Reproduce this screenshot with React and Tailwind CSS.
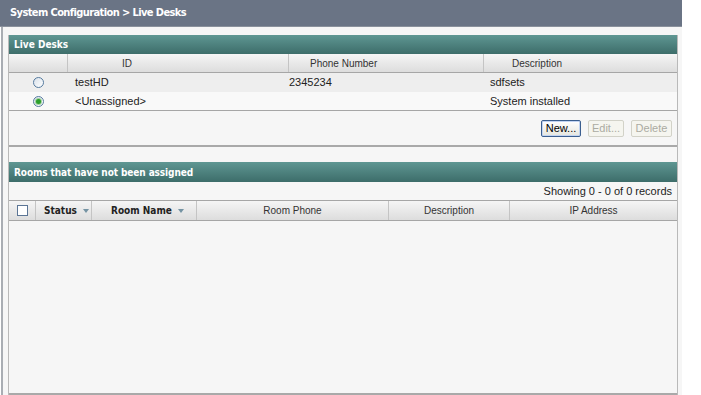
import React from "react";

const F = { fontFamily: '"Liberation Sans", Arial, sans-serif' };
const FB = { fontFamily: '"DejaVu Sans Condensed", "DejaVu Sans", sans-serif' };

function Radio({ checked }) {
  return (
    <div className="w-[11px] h-[11px] rounded-full border border-[#557a9e] bg-gradient-to-br from-[#d9e1ea] to-white flex items-center justify-center">
      {checked && <div className="w-[5px] h-[5px] rounded-full bg-[#2c9f2c] shadow-[0_0_0_1px_#9fd09f]" />}
    </div>
  );
}

function SortArrow() {
  return (
    <svg width="6" height="4" viewBox="0 0 6 4" className="ml-[6px]">
      <path d="M0 0 L6 0 L3 4 Z" fill="#7493a3" />
    </svg>
  );
}

function Btn({ children, primary, w }) {
  return (
    <div
      className={
        "h-[17px] flex items-center justify-center text-[11px] rounded-[2px] " +
        w +
        " " +
        (primary
          ? "border border-[#3a5e8f] bg-gradient-to-b from-white to-[#e6e6de] text-black shadow-[inset_0_0_0_1px_#c2d4f2]"
          : "border border-[#d2d2c8] bg-[#f5f5ef] text-[#ababa2]")
      }
      style={F}
    >
      {children}
    </div>
  );
}

export default function App() {
  return (
    <div className="w-[701px] h-[395px] bg-white overflow-hidden flex flex-col" style={F}>
      <div
        className="w-[682px] h-[27px] shrink-0 bg-[#6a7485] border-b border-[#8a919c] flex items-center pl-[10px] text-white text-[11px] font-bold tracking-[-0.6px]"
        style={FB}
      >
        System Configuration &gt; Live Desks
      </div>
      <div className="w-[682px] flex-1 flex pl-[1px]">
        <div className="w-[2px] bg-[#a9adb3]" />
        <div className="flex-1 bg-[#f6f6f6] pt-[8px] pl-[5px] pr-[4px] flex flex-col">
          <div className="flex-1 border-l border-r border-[#b9b9b9] flex flex-col">
            {/* Live Desks */}
            <div
              className="h-[19px] shrink-0 bg-gradient-to-b from-[#5f9793] to-[#3d6d6a] flex items-center pl-[5px] text-white text-[10px] font-bold"
              style={FB}
            >
              Live Desks
            </div>
            <div className="h-[19px] shrink-0 flex bg-gradient-to-b from-[#f5f5f5] to-[#dddddd] border-b border-[#a6a6a6] text-[10px] text-[#333]">
              <div className="w-[59px] border-r border-[#c4c4c4]" />
              <div className="w-[221px] border-r border-[#c4c4c4] flex items-center pl-[54px]">ID</div>
              <div className="w-[195px] border-r border-[#c4c4c4] flex items-center pl-[21px]">Phone Number</div>
              <div className="flex-1 flex items-center pl-[28px]">Description</div>
            </div>
            <div className="h-[19px] shrink-0 flex items-center bg-[#eeeeee] text-[11px] text-[#222]">
              <div className="w-[59px] flex justify-center"><Radio /></div>
              <div className="w-[221px] pl-[7px]">testHD</div>
              <div className="w-[195px]">2345234</div>
              <div className="flex-1 pl-[6px]">sdfsets</div>
            </div>
            <div className="h-[19px] shrink-0 flex items-center bg-[#f9f9f9] text-[11px] text-[#222] border-b border-[#a6a6a6]">
              <div className="w-[59px] flex justify-center"><Radio checked /></div>
              <div className="w-[221px] pl-[7px]">&lt;Unassigned&gt;</div>
              <div className="w-[195px]" />
              <div className="flex-1 pl-[6px]">System installed</div>
            </div>
            <div className="h-[36px] shrink-0 flex items-center justify-end gap-[7px] pr-[5px] border-b-2 border-[#a9a9a9]">
              <Btn primary w="w-[40px]">New...</Btn>
              <Btn w="w-[36px]">Edit...</Btn>
              <Btn w="w-[41px]">Delete</Btn>
            </div>
            <div className="h-[15px] shrink-0" />
            {/* Rooms */}
            <div
              className="h-[20px] shrink-0 bg-gradient-to-b from-[#5f9793] to-[#3d6d6a] flex items-center pl-[5px] text-white text-[10px] font-bold tracking-[-0.1px]"
              style={FB}
            >
              Rooms that have not been assigned
            </div>
            <div className="h-[19px] shrink-0 flex items-center justify-end pr-[5px] text-[11px] text-[#222] border-b border-[#a6a6a6]">
              Showing 0 - 0 of 0 records
            </div>
            <div className="h-[20px] shrink-0 flex bg-gradient-to-b from-[#f5f5f5] to-[#dddddd] border-b border-[#a6a6a6] text-[10px] text-[#333]">
              <div className="w-[27px] border-r border-[#c4c4c4] flex items-center justify-center">
                <div className="w-[11px] h-[11px] border border-[#5b7595] bg-white" />
              </div>
              <div
                className="w-[56px] border-r border-[#c4c4c4] flex items-center pl-[8px] font-bold text-[#222]"
                style={FB}
              >
                Status<SortArrow />
              </div>
              <div
                className="w-[105px] border-r border-[#c4c4c4] flex items-center pl-[19px] font-bold text-[#222]"
                style={FB}
              >
                Room Name<SortArrow />
              </div>
              <div className="w-[192px] border-r border-[#c4c4c4] flex items-center justify-center">Room Phone</div>
              <div className="w-[121px] border-r border-[#c4c4c4] flex items-center justify-center">Description</div>
              <div className="flex-1 flex items-center justify-center">IP Address</div>
            </div>
            <div className="flex-1 border-b-2 border-[#a9a9a9]" />
          </div>
        </div>
      </div>
    </div>
  );
}
